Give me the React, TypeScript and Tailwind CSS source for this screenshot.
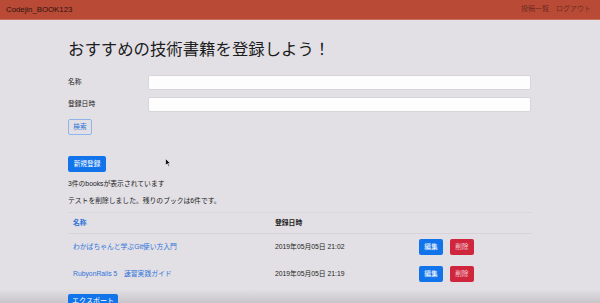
import React from 'react';

const font = "font-['Liberation_Sans','Noto_Sans_CJK_JP',sans-serif]";

const books = [
  { name: 'わかばちゃんと学ぶGit使い方入門', date: '2019年05月05日 21:02' },
  { name: 'RubyonRails 5　速習実践ガイド', date: '2019年05月05日 21:19' },
];

export default function App() {
  return (
    <div className={`relative h-[303px] w-[600px] overflow-hidden bg-[#e2e0e5] text-[#222] ${font}`}>
      {/* bottom shade, sits behind the content */}
      <div className="pointer-events-none absolute bottom-0 left-0 h-[14px] w-full bg-gradient-to-b from-transparent to-[#c8c6cb]" />

      {/* Navbar */}
      <header className="relative flex h-[20px] items-center justify-between border-b border-[#c9705f] bg-[#b94a36] px-[6px]">
        <span className="text-[7.8px] text-[#2c1410]">Codejin_BOOK123</span>
        <nav className="flex gap-[7px] pr-[3px] text-[7px] text-[#6e2a1e]">
          <span>投稿一覧</span>
          <span>ログアウト</span>
        </nav>
      </header>

      <main className="relative mx-auto w-[464px]">
        <h1 className="mt-[17px] text-[16.4px] leading-[24px] text-[#1c1c1c]">
          おすすめの技術書籍を登録しよう！
        </h1>

        {/* Search form */}
        <div className="mt-[14px] flex flex-col gap-[7px]">
          <div className="flex items-center">
            <label className="w-[80px] text-[6.8px] text-[#1e1e1e]">名称</label>
            <div className="h-[15px] w-[383px] rounded-[2px] border border-[#d7d5da] bg-[#fdfdfe]" />
          </div>
          <div className="flex items-center">
            <label className="w-[80px] text-[6.8px] text-[#1e1e1e]">登録日時</label>
            <div className="h-[15px] w-[383px] rounded-[2px] border border-[#d7d5da] bg-[#fdfdfe]" />
          </div>
        </div>
        <button className="mt-[7px] flex h-[16px] w-[24px] items-center justify-center rounded-[2px] border border-[#8fb5ee] text-[6.7px] text-[#2f73d9]">
          検索
        </button>

        <button className="mt-[21px] flex h-[16px] w-[38px] items-center justify-center rounded-[2px] bg-[#1274ea] text-[6.7px] text-white">
          新規登録
        </button>

        <p className="mt-[6px] text-[6.8px] leading-[12px]">3件のbooksが表示されています</p>
        <p className="mt-[5px] text-[6.8px] leading-[12px]">テストを削除しました。残りのブックは6件です。</p>

        {/* Table */}
        <table className="mt-[5px] w-full border-t border-[#d9d7dc] text-[6.8px]">
          <thead>
            <tr className="h-[21px] border-b border-[#d6d4d9]">
              <th className="w-[207px] pl-[5px] text-left font-bold text-[#2f73d9]">名称</th>
              <th className="w-[144px] text-left font-bold">登録日時</th>
              <th />
            </tr>
          </thead>
          <tbody>
            {books.map((b) => (
              <tr key={b.name} className="h-[27px]">
                <td className="pl-[5px] text-[#2f73d9]">{b.name}</td>
                <td>{b.date}</td>
                <td>
                  <div className="flex gap-[7px]">
                    <button className="flex h-[16px] w-[24px] items-center justify-center rounded-[2px] bg-[#1274ea] text-[6.7px] text-white">
                      編集
                    </button>
                    <button className="flex h-[16px] w-[24px] items-center justify-center rounded-[2px] bg-[#d0263d] text-[6.7px] text-[#f3d0d5]">
                      削除
                    </button>
                  </div>
                </td>
              </tr>
            ))}
          </tbody>
        </table>

        <button className="mt-[6px] flex h-[16px] w-[50px] items-center justify-center rounded-[2px] bg-[#1274ea] text-[7px] text-white">
          エクスポート
        </button>
      </main>

      {/* mouse cursor */}
      <svg className="absolute left-[165px] top-[158px]" width="6" height="9" viewBox="0 0 6 9">
        <path d="M0.5 0.5 L0.5 7.5 L2.2 5.8 L3.5 8.5 L4.5 8 L3.3 5.4 L5.5 5.4 Z" fill="#111" stroke="#fff" strokeWidth="0.6" />
      </svg>
    </div>
  );
}
